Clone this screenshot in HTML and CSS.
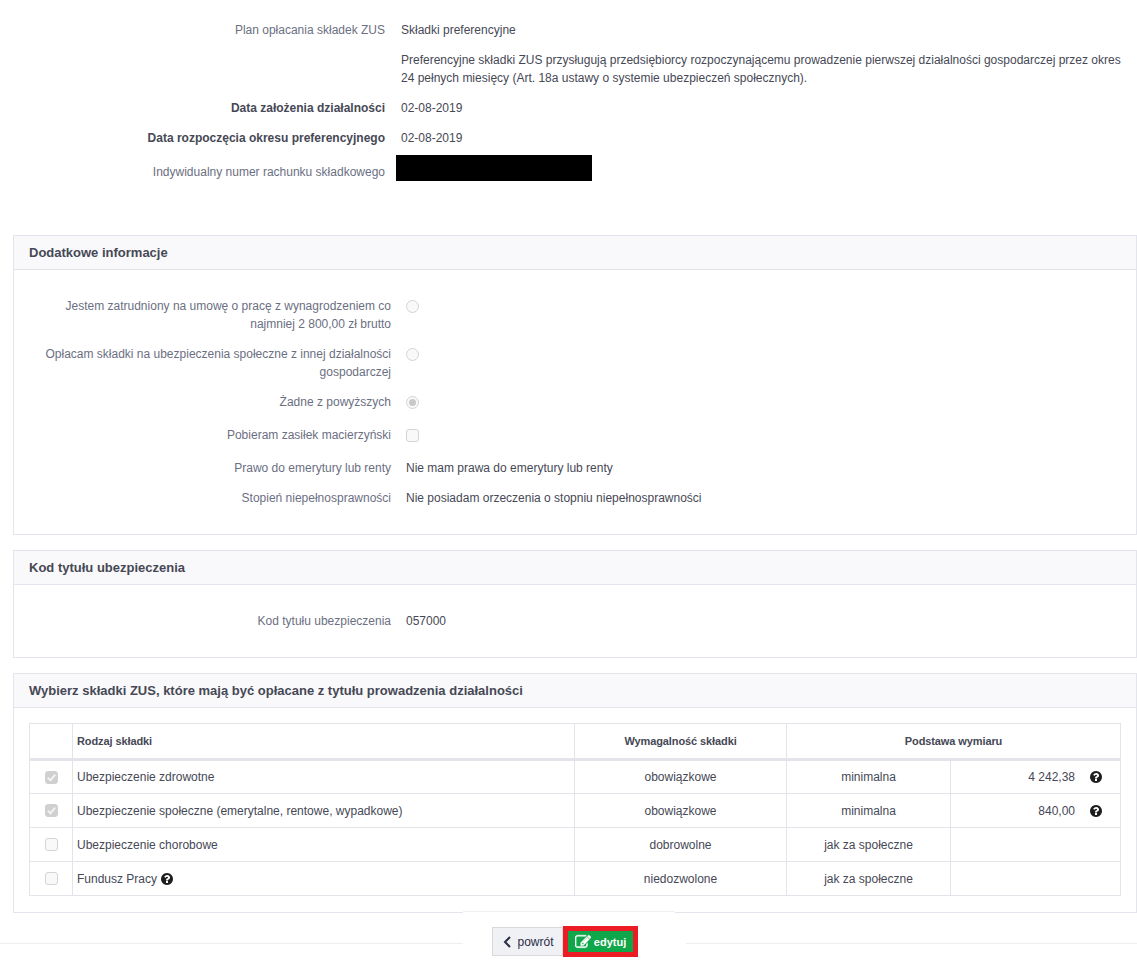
FILE: index.html
```html
<!DOCTYPE html>
<html lang="pl">
<head>
	<meta charset="utf-8">
	<title>Składki ZUS</title>
	<link rel="stylesheet" href="styles.css">
</head>
<body>
	<svg class="defs" width="0" height="0">
		<symbol id="ico-help" viewBox="0 0 1792 1792"><path d="M1024 1376v-192q0-14-9-23t-23-9h-192q-14 0-23 9t-9 23v192q0 14 9 23t23 9h192q14 0 23-9t9-23zm256-672q0-88-55.5-163t-138.5-116-170-41q-243 0-371 213-15 24 8 42l132 100q7 6 19 6 16 0 25-12 53-68 86-92 34-24 86-24 48 0 85.5 26t37.5 59q0 38-20 61t-68 45q-63 28-115.5 86.5t-52.5 125.5v36q0 14 9 23t23 9h192q14 0 23-9t9-23q0-19 21.5-49.5t54.5-49.5q32-18 49-28.5t46-35 44.5-48 28-60.5 12.5-81zm384 192q0 209-103 385.5t-279.5 279.5-385.5 103-385.5-103-279.5-279.5-103-385.5 103-385.5 279.5-279.5 385.5-103 385.5 103 279.5 279.5 103 385.5z"/></symbol>
		<symbol id="ico-check" viewBox="0 0 14 14"><path d="M3 7.2l2.8 2.8L11 4" fill="none" stroke="#f4f4f4" stroke-width="2"/></symbol>
	</svg>

	<section class="summary">
		<div class="row">
			<div class="label">Plan opłacania składek ZUS</div>
			<div class="value">Składki preferencyjne</div>
		</div>
		<div class="row">
			<div class="label"></div>
			<div class="value">Preferencyjne składki ZUS przysługują przedsiębiorcy rozpoczynającemu prowadzenie pierwszej działalności gospodarczej przez okres 24 pełnych miesięcy (Art. 18a ustawy o systemie ubezpieczeń społecznych).</div>
		</div>
		<div class="row">
			<div class="label strong">Data założenia działalności</div>
			<div class="value">02-08-2019</div>
		</div>
		<div class="row">
			<div class="label strong">Data rozpoczęcia okresu preferencyjnego</div>
			<div class="value">02-08-2019</div>
		</div>
		<div class="row row-account">
			<div class="label">Indywidualny numer rachunku składkowego</div>
			<div class="redacted"></div>
		</div>
	</section>

	<section class="panel panel-info">
		<h2>Dodatkowe informacje</h2>
		<div class="panel-body form">
			<div class="row">
				<div class="label">Jestem zatrudniony na umowę o pracę z wynagrodzeniem co najmniej 2 800,00 zł brutto</div>
				<div class="value"><span class="radio"></span></div>
			</div>
			<div class="row">
				<div class="label">Opłacam składki na ubezpieczenia społeczne z innej działalności gospodarczej</div>
				<div class="value"><span class="radio"></span></div>
			</div>
			<div class="row wide">
				<div class="label">Żadne z powyższych</div>
				<div class="value"><span class="radio on"></span></div>
			</div>
			<div class="row wide">
				<div class="label">Pobieram zasiłek macierzyński</div>
				<div class="value"><span class="check"></span></div>
			</div>
			<div class="row">
				<div class="label">Prawo do emerytury lub renty</div>
				<div class="value">Nie mam prawa do emerytury lub renty</div>
			</div>
			<div class="row">
				<div class="label">Stopień niepełnosprawności</div>
				<div class="value">Nie posiadam orzeczenia o stopniu niepełnosprawności</div>
			</div>
		</div>
	</section>

	<section class="panel panel-code">
		<h2>Kod tytułu ubezpieczenia</h2>
		<div class="panel-body form">
			<div class="row">
				<div class="label">Kod tytułu ubezpieczenia</div>
				<div class="value">057000</div>
			</div>
		</div>
	</section>

	<section class="panel panel-table">
		<h2>Wybierz składki ZUS, które mają być opłacane z tytułu prowadzenia działalności</h2>
		<div class="panel-body">
			<table class="fees">
				<colgroup>
					<col class="c-check">
					<col class="c-name">
					<col class="c-due">
					<col class="c-kind">
					<col class="c-amount">
				</colgroup>
				<thead>
					<tr>
						<th></th>
						<th class="left">Rodzaj składki</th>
						<th>Wymagalność składki</th>
						<th colspan="2">Podstawa wymiaru</th>
					</tr>
				</thead>
				<tbody>
					<tr>
						<td><span class="check on"><svg width="13" height="13"><use href="#ico-check"/></svg></span></td>
						<td class="left">Ubezpieczenie zdrowotne</td>
						<td>obowiązkowe</td>
						<td>minimalna</td>
						<td class="amount">4 242,38<svg class="help" width="14" height="14"><use href="#ico-help"/></svg></td>
					</tr>
					<tr>
						<td><span class="check on"><svg width="13" height="13"><use href="#ico-check"/></svg></span></td>
						<td class="left">Ubezpieczenie społeczne (emerytalne, rentowe, wypadkowe)</td>
						<td>obowiązkowe</td>
						<td>minimalna</td>
						<td class="amount">840,00<svg class="help" width="14" height="14"><use href="#ico-help"/></svg></td>
					</tr>
					<tr>
						<td><span class="check"></span></td>
						<td class="left">Ubezpieczenie chorobowe</td>
						<td>dobrowolne</td>
						<td>jak za społeczne</td>
						<td></td>
					</tr>
					<tr>
						<td><span class="check"></span></td>
						<td class="left">Fundusz Pracy <svg class="help-inline" width="14" height="14"><use href="#ico-help"/></svg></td>
						<td>niedozwolone</td>
						<td>jak za społeczne</td>
						<td></td>
					</tr>
				</tbody>
			</table>
		</div>
	</section>

	<footer class="actions">
		<div class="actions-bar">
			<a class="btn btn-back">
				<svg width="9" height="12" viewBox="0 0 9 12"><path d="M7 1L2 6l5 5" fill="none" stroke="#2a2e45" stroke-width="2"/></svg>
				powrót
			</a>
			<div class="highlight">
				<a class="btn btn-edit">
					<svg width="16" height="16" viewBox="0 0 1792 1792"><path fill="#fff" stroke="#fff" stroke-width="50" d="M888 1184l116-116-152-152-116 116v56h96v96h56zm440-720q-16-16-33 1l-350 350q-17 17-1 33t33-1l350-350q17-17 1-33zm80 594v190q0 119-84.5 203.5t-203.5 84.5h-832q-119 0-203.5-84.5t-84.5-203.5v-832q0-119 84.5-203.5t203.5-84.5h832q63 0 117 25 15 7 18 23 3 17-9 29l-49 49q-14 14-32 8-23-6-45-6h-832q-66 0-113 47t-47 113v832q0 66 47 113t113 47h832q66 0 113-47t47-113v-126q0-13 9-22l64-64q15-15 35-7t20 29zm-96-738l288 288-672 672h-288v-288zm444 132l-92 92-288-288 92-92q28-28 68-28t68 28l152 152q28 28 28 68t-28 68z"/></svg>
					edytuj
				</a>
			</div>
		</div>
	</footer>
</body>
</html>
```

FILE: styles.css
```css
* {
	box-sizing: border-box;
}

html,
body {
	margin: 0;
	padding: 0;
	background: #fff;
}

body {
	height: 971px;
	overflow: hidden;
	font-family: "Liberation Sans", Arial, sans-serif;
	font-size: 12px;
	line-height: 18px;
	color: #464855;
}

.defs {
	position: absolute;
}

/* top block */
.summary {
	padding: 21px 15px 0 0;
	height: 235px;
}

.row {
	display: flex;
	margin-bottom: 12px;
}

.label {
	flex: none;
	text-align: right;
	color: #6b6f82;
}

.summary .label {
	width: 385px;
}

.summary .value {
	margin-left: 16px;
}

.label.strong {
	font-weight: bold;
	color: #464855;
}

.row-account {
	margin-top: -4px;
}

.row-account .label {
	padding-top: 8px;
}

.redacted {
	width: 196px;
	height: 26px;
	margin-left: 11px;
	background: #000;
}

/* panels */
.panel {
	margin: 0 0 15px 13px;
	border: 1px solid #e4e5ec;
}

.panel h2 {
	margin: 0;
	height: 34px;
	padding: 0 15px;
	font-size: 13px;
	line-height: 33px;
	font-weight: bold;
	color: #464855;
	background: #f9f9fb;
	border-bottom: 1px solid #e4e5ec;
}

.form .label {
	width: 377px;
	padding-left: 15px;
}

.form .value {
	margin-left: 15px;
	display: flex;
	align-items: flex-start;
}

.panel-info {
	height: 300px;
}

.panel-info .panel-body {
	padding-top: 27px;
}

.form .row.wide {
	margin-bottom: 15px;
}

.panel-code {
	height: 108px;
}

.panel-code .panel-body {
	padding-top: 27px;
}

.panel-table {
	height: 240px;
	margin-bottom: 0;
}

.panel-table .panel-body {
	padding: 15px;
}

/* inputs */
.radio,
.check {
	display: block;
	width: 13px;
	height: 13px;
	background: #f9f9f9;
	border: 1px solid #d4d4d4;
}

.form .radio,
.form .check {
	margin-top: 3px;
}

.radio {
	border-radius: 50%;
	position: relative;
}

.radio.on::after {
	content: "";
	position: absolute;
	left: 2px;
	top: 2px;
	width: 7px;
	height: 7px;
	border-radius: 50%;
	background: #c9c9c9;
}

.check {
	border-radius: 3px;
}

.check.on {
	background: #d0d0d0;
	border-color: #d0d0d0;
}

.check.on svg {
	display: block;
	margin: -1px;
}

/* table */
.fees {
	width: 1092px;
	border-collapse: collapse;
	table-layout: fixed;
}

.c-check {
	width: 43px;
}

.c-name {
	width: 502px;
}

.c-due {
	width: 212px;
}

.c-kind {
	width: 164px;
}

.c-amount {
	width: 170px;
}

.fees th,
.fees td {
	border: 1px solid #e3e4ea;
	padding: 0 4px;
	text-align: center;
}

.fees th {
	height: 36px;
	font-size: 11px;
	font-weight: bold;
	letter-spacing: -0.1px;
	border-bottom: 3px solid #e3e4ea;
}

.fees td {
	height: 34px;
}

.fees td .check {
	margin: 0 auto;
}

.fees td:first-child {
	padding-left: 5px;
}

.fees .left {
	text-align: left;
}

.fees .amount {
	text-align: right;
	padding-right: 17px;
}

.help {
	margin-left: 14px;
	vertical-align: -3px;
	fill: #1e1e1e;
}

.help-inline {
	vertical-align: -3px;
	fill: #1e1e1e;
}

/* bottom buttons */
.actions {
	position: relative;
	margin-top: 30px;
	height: 1px;
	background: #eee;
}

.actions-bar {
	position: absolute;
	left: 463px;
	top: -32px;
	width: 223px;
	height: 48px;
	padding: 15px 0 0 29px;
	display: flex;
	align-items: flex-start;
	background: #fff;
}

/* light top edge of the bar */
.actions-bar::before {
	content: "";
	position: absolute;
	left: 0;
	top: 0;
	width: 212px;
	height: 1px;
	background: #f1f1f3;
}

/* panel border shows again right of the bar */
.actions-bar::after {
	content: "";
	position: absolute;
	right: 0;
	top: 1px;
	width: 11px;
	height: 1px;
	background: #e4e5ec;
}

.btn {
	display: flex;
	align-items: center;
	gap: 5px;
	font-weight: normal;
}

.btn-back {
	width: 71px;
	height: 29px;
	margin-top: 1px;
	padding-left: 2px;
	justify-content: center;
	background: #f0f1f5;
	border: 1px solid #d9d9d9;
	color: #2a2e45;
}

.highlight {
	border: 5px solid #ec1c24;
	width: 75px;
	height: 31px;
}

.btn-edit {
	height: 21px;
	gap: 3px;
	justify-content: center;
	background: #10a64a;
	color: #fff;
	font-weight: bold;
	font-size: 11px;
}
```
